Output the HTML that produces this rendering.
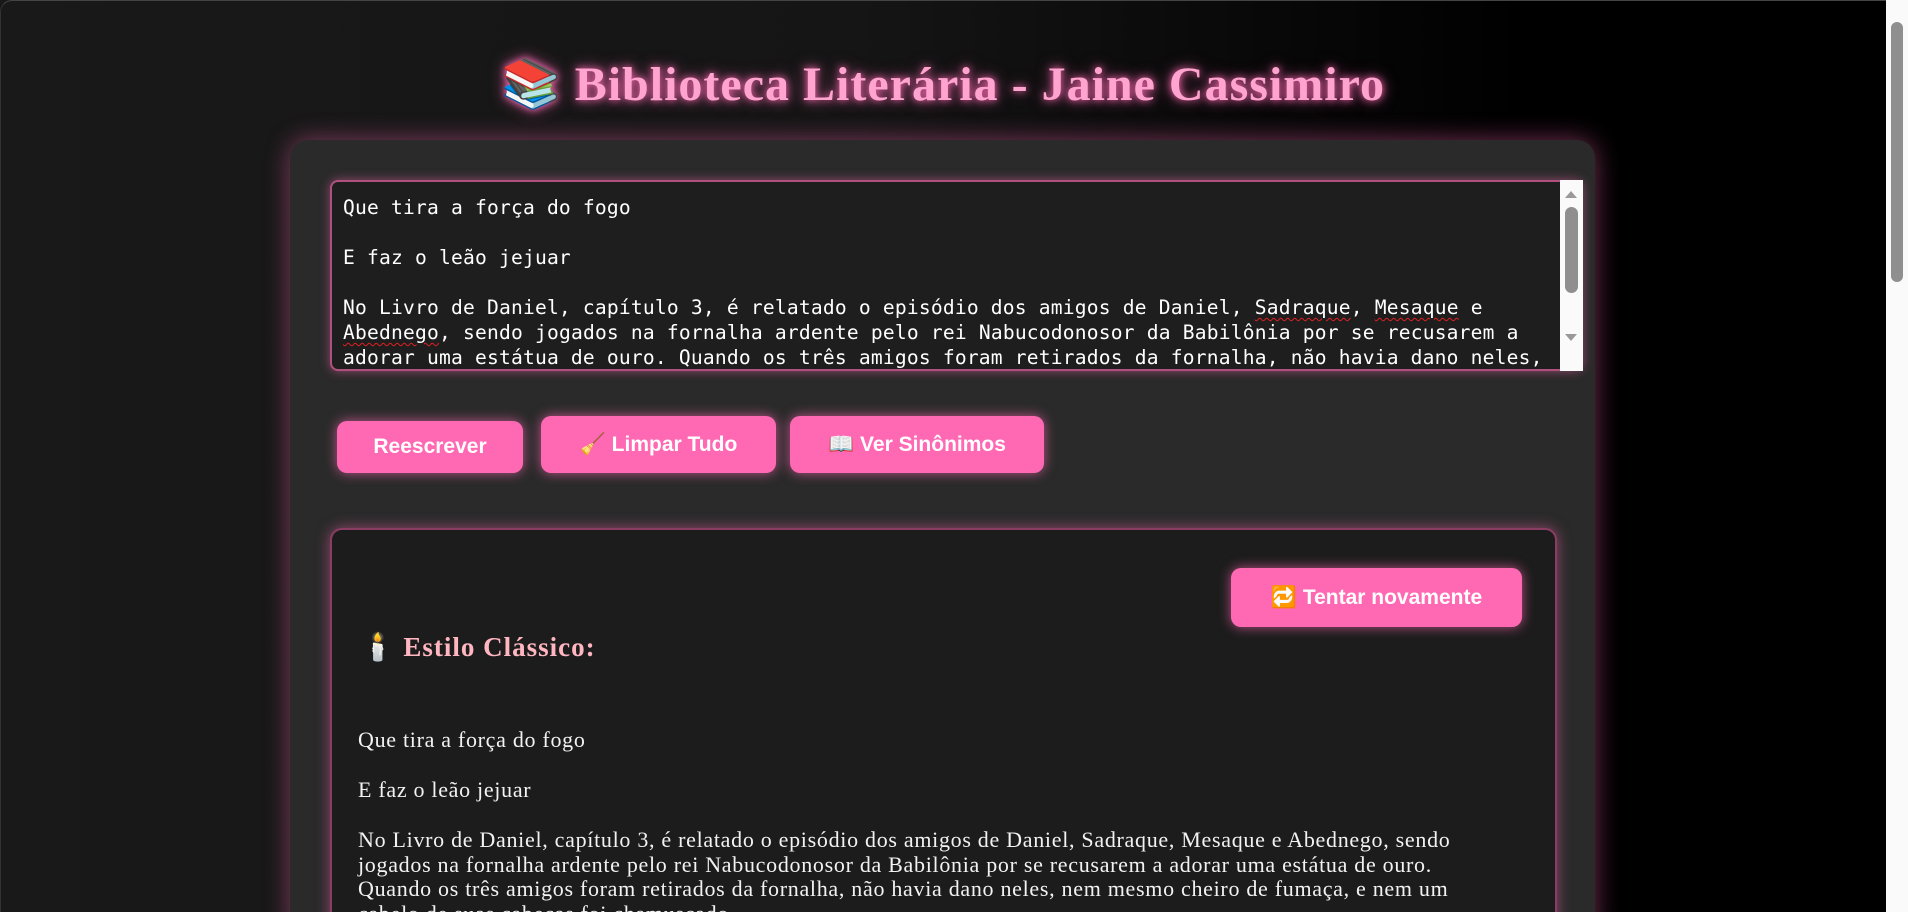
<!DOCTYPE html>
<html><head><meta charset="utf-8">
<style>
html,body{margin:0;padding:0;width:1908px;height:912px;overflow:hidden}
body{background:linear-gradient(to right,#191919 0%,#151515 45%,#000 80%,#000 100%);font-family:"Liberation Sans",sans-serif;position:relative}
.frame{position:absolute;left:0;top:0;width:1886px;height:912px;border-top-left-radius:12px;border-top:1px solid #444;border-left:1px solid #333;box-sizing:border-box}
h1{position:absolute;left:0;width:1886px;top:57px;margin:0;text-align:center;font-family:"Liberation Serif",serif;font-weight:bold;font-size:48px;letter-spacing:1px;line-height:56px;color:#ffa3cf;text-shadow:0 0 8px #ff69b4,0 0 16px rgba(255,105,180,.6)}
.container{position:absolute;left:290px;top:140px;width:1305px;height:800px;background:#2a2a2a;border-radius:18px;box-shadow:0 0 25px rgba(255,105,180,.45)}
.ta{position:absolute;left:330px;top:180px;width:1253px;height:191px;background:#1e1e1e;border:2px solid #b0507f;border-radius:8px;box-shadow:0 0 10px rgba(255,105,180,.5);box-sizing:border-box;overflow:hidden}
.ta pre{margin:0;padding:13px 0 0 11px;font-family:"DejaVu Sans Mono",monospace;font-size:19.6px;letter-spacing:.2px;line-height:25px;color:#fff;white-space:pre}
.u{text-decoration:underline wavy #e02020;text-decoration-thickness:1px;text-underline-offset:3px}
.sb{position:absolute;left:1560px;top:180px;width:23px;height:191px;background:#fafafa}
.sb .th{position:absolute;left:5px;top:27px;width:13px;height:86px;background:#8f8f8f;border-radius:7px}
.up{position:absolute;left:5px;top:11px;border-left:6px solid transparent;border-right:6px solid transparent;border-bottom:7px solid #999}
.dn{position:absolute;left:5px;top:154px;border-left:6px solid transparent;border-right:6px solid transparent;border-top:7px solid #999}
.btn{position:absolute;background:#ff69b4;color:#fff;font-weight:bold;font-size:21px;border-radius:10px;box-shadow:0 0 12px rgba(255,105,180,.7);display:flex;align-items:center;justify-content:center;white-space:nowrap}
.out{position:absolute;left:330px;top:528px;width:1227px;height:420px;background:#1c1c1c;border:2px solid #8a3d63;border-radius:12px;box-shadow:0 0 14px rgba(255,105,180,.5);box-sizing:border-box}
h3{position:absolute;left:361px;top:631px;margin:0;font-family:"Liberation Serif",serif;font-weight:bold;font-size:27px;letter-spacing:1px;color:#ffb6c1}
.p{position:absolute;left:358px;font-family:"Liberation Serif",serif;font-size:22px;line-height:24.5px;color:#f2f2f2;white-space:nowrap;letter-spacing:.7px}
.psb{position:absolute;left:1886px;top:0;width:22px;height:912px;background:#fafafa}
.psb .th{position:absolute;left:5px;top:22px;width:12px;height:260px;background:#8f8f8f;border-radius:6px}
</style></head><body>
<div class="frame"></div>
<h1>📚 Biblioteca Literária - Jaine Cassimiro</h1>
<div class="container"></div>
<div class="ta"><pre>Que tira a força do fogo

E faz o leão jejuar

No Livro de Daniel, capítulo 3, é relatado o episódio dos amigos de Daniel, <span class="u">Sadraque</span>, <span class="u">Mesaque</span> e
<span class="u">Abednego</span>, sendo jogados na fornalha ardente pelo rei Nabucodonosor da Babilônia por se recusarem a
adorar uma estátua de ouro. Quando os três amigos foram retirados da fornalha, não havia dano neles,</pre></div>
<div class="sb"><div class="up"></div><div class="th"></div><div class="dn"></div></div>
<div class="btn" style="left:337px;top:421px;width:186px;height:52px">Reescrever</div>
<div class="btn" style="left:541px;top:416px;width:235px;height:57px">🧹 Limpar Tudo</div>
<div class="btn" style="left:790px;top:416px;width:254px;height:57px">📖 Ver Sinônimos</div>
<div class="out"></div>
<div class="btn" style="left:1231px;top:568px;width:291px;height:59px">🔁 Tentar novamente</div>
<h3>🕯️ Estilo Clássico:</h3>
<div class="p" style="top:728px">Que tira a força do fogo</div>
<div class="p" style="top:778px">E faz o leão jejuar</div>
<div class="p" style="top:828px">No Livro de Daniel, capítulo 3, é relatado o episódio dos amigos de Daniel, Sadraque, Mesaque e Abednego, sendo<br>jogados na fornalha ardente pelo rei Nabucodonosor da Babilônia por se recusarem a adorar uma estátua de ouro.<br>Quando os três amigos foram retirados da fornalha, não havia dano neles, nem mesmo cheiro de fumaça, e nem um<br>cabelo de suas cabeças foi chamuscado.</div>
<div class="psb"><div class="th"></div></div>
</body></html>
